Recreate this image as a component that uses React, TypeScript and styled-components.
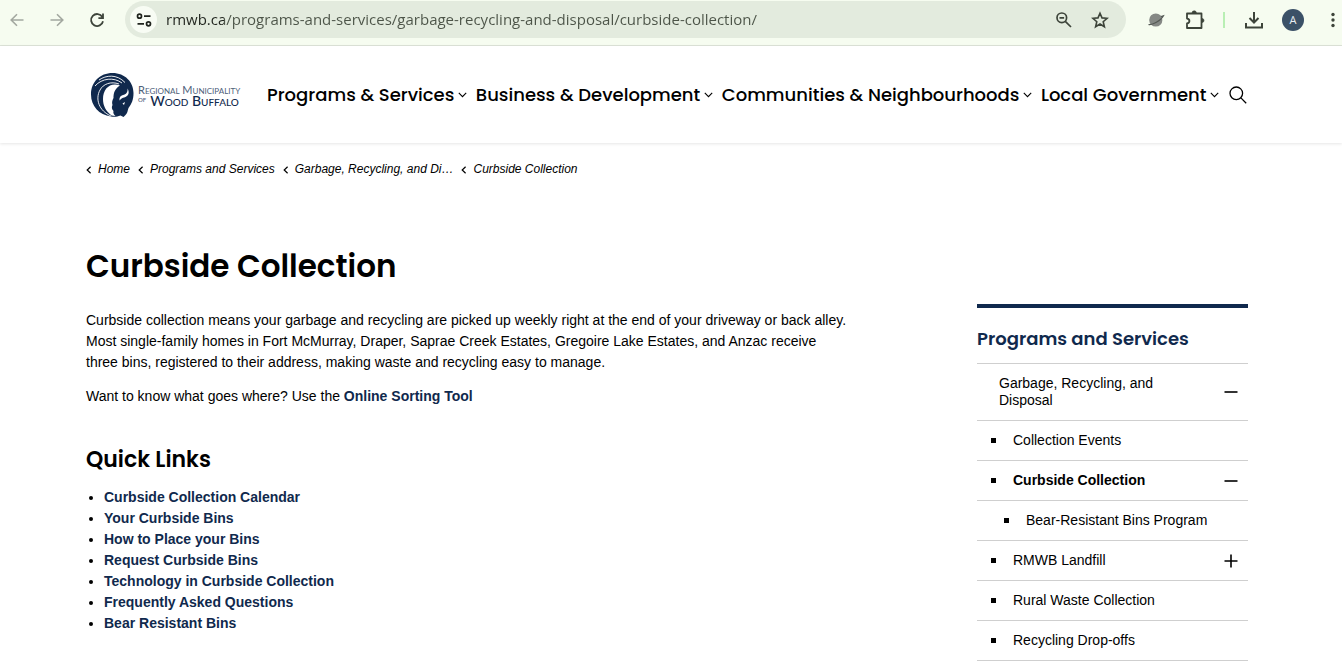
import React from "react";
import styled, { createGlobalStyle } from "styled-components";

const sans = `"Liberation Sans", Arial, sans-serif`;
const display = `Poppins, Inter, sans-serif`;
const ui = `"Open Sans", "Noto Sans", sans-serif`;
const navy = "#10294d";

const GlobalStyle = createGlobalStyle`
  *, *::before, *::after { box-sizing: border-box; }
  body { margin: 0; background: #fff; color: #000; font-family: ${sans}; font-size: 14px; line-height: 21px; }
  button, input { font: inherit; color: inherit; }
  a { color: inherit; text-decoration: none; }
`;

const Toolbar = styled.header`
  display: flex;
  align-items: center;
  height: 46px;
  padding: 0 0 6px 5px;
  background: #f6fcf0;
  border-bottom: 1px solid #dde3d8;
  color: #3d443a;
`;

const IconButton = styled.button<{ $size?: number; $muted?: boolean }>`
  display: flex;
  align-items: center;
  justify-content: center;
  flex: none;
  width: ${(p) => p.$size ?? 40}px;
  height: 36px;
  padding: 0;
  border: 0;
  background: none;
  color: ${(p) => (p.$muted ? "#a3a8a0" : "inherit")};
`;

const History = styled.div`
  display: flex;
  gap: 16px;
  margin-right: 16px;
`;

const Omnibox = styled.form`
  display: flex;
  align-items: center;
  flex: 1;
  height: 37px;
  padding: 0 8px 0 5px;
  border-radius: 19px;
  background: #e3ebde;
`;

const SiteInfo = styled(IconButton)`
  width: 27px;
  height: 27px;
  border-radius: 50%;
  background: #f8fcf4;
`;

const Address = styled.input`
  flex: 1;
  min-width: 0;
  margin: 0 9px;
  padding: 0 0 2px;
  border: 0;
  outline: 0;
  font-family: ${ui};
  font-size: 15px;
  line-height: 20px;
  color: transparent;
  background: linear-gradient(to right, #20241e 58px, #4c5448 58px);
  background-clip: text;
`;

const Extensions = styled.div`
  display: flex;
  align-items: center;
  padding-left: 10px;
`;

const Divider = styled.span`
  width: 2px;
  height: 16px;
  margin: 0 9px;
  background: #b9efb4;
`;

const MoreButton = styled(IconButton)`
  margin-left: 12px;
`;

const Avatar = styled.span`
  display: grid;
  place-items: center;
  width: 22px;
  height: 22px;
  border-radius: 50%;
  background: #3b5167;
  color: #e8edf2;
  font: 500 11px/22px ${ui};
`;

const SiteHeader = styled.header`
  display: flex;
  align-items: center;
  height: 97px;
  padding: 0 94px 0 90px;
  box-shadow: 0 1px 3px rgba(0, 0, 0, 0.1);
`;

const Logo = styled.a`
  display: flex;
  align-items: center;
  gap: 3px;
  flex: none;
  width: 149px;
  margin-right: 28px;
  color: ${navy};
`;

const Wordmark = styled.span`
  display: grid;
  font-family: Lato, sans-serif;
  font-variant: small-caps;
  white-space: nowrap;
`;

const WordmarkTop = styled.span`
  font-size: 11px;
  line-height: 11px;
  color: #4d6079;
`;

const WordmarkBottom = styled.span`
  display: flex;
  gap: 4px;
  font-size: 14px;
  font-weight: 500;
  line-height: 11px;
`;

const Of = styled.small`
  font-size: 9px;
  line-height: 8px;
  color: #4d6079;
`;

const Menu = styled.nav`
  display: flex;
  flex: 1;
  align-items: center;
  justify-content: space-between;
`;

const MenuButton = styled.button`
  display: flex;
  align-items: center;
  gap: 4px;
  padding: 0;
  border: 0;
  background: none;
  font: 500 18px/28px ${display};
  white-space: nowrap;
`;

const Crumbs = styled.ol`
  display: flex;
  align-items: center;
  gap: 8px;
  margin: 0;
  padding: 16px 94px 0 86px;
  list-style: none;
  font-size: 12px;
  font-style: italic;
`;

const Crumb = styled.li`
  display: flex;
  align-items: center;
  gap: 6px;
`;

const Page = styled.div`
  display: grid;
  grid-template-columns: minmax(0, 1fr) 271px;
  column-gap: 120px;
  padding: 66px 94px 0 86px;
`;

const Main = styled.main`
  min-width: 0;
`;

const Title = styled.h1`
  margin: 0 0 24px;
  font: 600 31px/40px ${display};
`;

const Subtitle = styled.h2`
  margin: 0 0 12px;
  padding-top: 25px;
  font: 600 22px/30px ${display};
`;

const Text = styled.p`
  max-width: 764px;
  margin: 0 0 13px;
`;

const StrongLink = styled.a`
  font-weight: 700;
  color: ${navy};
`;

const Links = styled.ul`
  margin: 0;
  padding-left: 18px;
`;

const Side = styled.nav`
  align-self: start;
  margin-top: 58px;
  border-top: 4px solid ${navy};
`;

const SideTitle = styled.h2`
  margin: 0;
  padding: 16px 0 9px;
  font: 600 18px/30px ${display};
  color: ${navy};
`;

const SideList = styled.ul`
  margin: 0;
  padding: 0;
  list-style: none;
  border-bottom: 1px solid #cfcfcf;
`;

const SideRow = styled.li<{ $indent: number; $bold?: boolean }>`
  display: flex;
  align-items: center;
  min-height: 40px;
  padding: 11px 6px 11px ${(p) => p.$indent}px;
  border-top: 1px solid #cfcfcf;
  line-height: 17px;
  font-weight: ${(p) => (p.$bold ? 700 : 400)};
`;

const Square = styled.span`
  flex: none;
  width: 5px;
  height: 5px;
  margin-right: 17px;
  background: #000;
`;

const SideLink = styled.a<{ $narrow?: boolean }>`
  max-width: ${(p) => (p.$narrow ? "180px" : "none")};
`;

const Toggle = styled.button`
  display: flex;
  margin: 0 0 0 auto;
  padding: 0 4px;
  border: 0;
  background: none;
`;

const Chevron = () => (
  <svg width="9" height="6" viewBox="0 0 9 6" fill="none" stroke="#000" strokeWidth="1.1" aria-hidden>
    <path d="M.8.8 4.5 4.6 8.2.8" />
  </svg>
);

const CrumbArrow = () => (
  <svg width="6" height="8" viewBox="0 0 6 8" fill="none" stroke="#000" strokeWidth="1.2" aria-hidden>
    <path d="M4.600 .8 1.200 4 4.600 7.200" />
  </svg>
);

const BisonMark = styled.svg`
  flex: none;
`;

const Bison = () => (
  <BisonMark width="45" height="46" viewBox="0 0 45 46" aria-hidden>
    <path d="M22.500 1C35 1 43.500 10 43.500 21c0 7-2 11-5 15-1 3-1 5-3 7l-2 2-3-1.500C27 45 24 45 21 44.500 9 43 1 34 1 22.500 1 10 10 1 22.500 1z" fill={navy} />
    <path d="M30 13.500C20 10 13 17 13 27c0 7 3 12 8.500 16.500l4 .5c-2-2-2.500-3-2-5-2-2-2-4-1-6-1-3 0-5 1-7 0-5 1-9 6.500-12.500z" fill="#fff" />
    <path d="M37.500 16.500c2 3.500 1.500 7-2 8.500-2 .8-3 .5-4.500 2l-1.500 1.500c-.5-3 1-5 3.500-5.500 3-.8 5-2.500 4.500-6.500z" fill="#fff" />
    <path d="M32.500 31.500l2.500-1.500-1 3z" fill="#fff" />
    <path d="M9 8C16 3 27 2 35 10.500M5 14C12 6 24 5 32 11M21 44C9 39 5 27 10 18 13 12 21 9 29 12" fill="none" stroke="#fff" strokeWidth="0.9" />
  </BisonMark>
);

const menu = ["Programs & Services", "Business & Development", "Communities & Neighbourhoods", "Local Government"];
const crumbs = ["Home", "Programs and Services", "Garbage, Recycling, and Di…", "Curbside Collection"];
const quickLinks = [
  "Curbside Collection Calendar",
  "Your Curbside Bins",
  "How to Place your Bins",
  "Request Curbside Bins",
  "Technology in Curbside Collection",
  "Frequently Asked Questions",
  "Bear Resistant Bins",
];

type SideItem = { label: string; level: 0 | 1 | 2; current?: boolean; toggle?: "open" | "closed" };
const sideItems: SideItem[] = [
  { label: "Garbage, Recycling, and Disposal", level: 0, toggle: "open" },
  { label: "Collection Events", level: 1 },
  { label: "Curbside Collection", level: 1, current: true, toggle: "open" },
  { label: "Bear-Resistant Bins Program", level: 2 },
  { label: "RMWB Landfill", level: 1, toggle: "closed" },
  { label: "Rural Waste Collection", level: 1 },
  { label: "Recycling Drop-offs", level: 1 },
];
const indents = [22, 14, 27];

export default function App() {
  return (
    <>
      <GlobalStyle />
      <Toolbar>
        <History>
          <IconButton $size={24} $muted aria-label="Back">
            <svg width="16" height="16" viewBox="0 0 16 16" fill="none" stroke="currentColor" strokeWidth="1.6"><path d="M14.500 8H2.500M8 2.200 2.200 8 8 13.800" /></svg>
          </IconButton>
          <IconButton $size={24} $muted aria-label="Forward">
            <svg width="16" height="16" viewBox="0 0 16 16" fill="none" stroke="currentColor" strokeWidth="1.6"><path d="M1.500 8h12M8 2.200 13.800 8 8 13.800" /></svg>
          </IconButton>
          <IconButton $size={24} aria-label="Reload">
            <svg width="16" height="16" viewBox="0 0 16 16" fill="none" stroke="currentColor" strokeWidth="1.8"><path d="M13.300 5A6 6 0 1 0 14 9.200M14 1.500v4.600H9.400" /></svg>
          </IconButton>
        </History>
        <Omnibox>
          <SiteInfo type="button" aria-label="Site information">
            <svg width="16" height="14" viewBox="0 0 16 14" fill="none" stroke="#20241e" strokeWidth="1.700"><circle cx="3.500" cy="3.200" r="2" /><path d="M8 3.200h6.500M1.500 10.800H8" /><circle cx="12.500" cy="10.800" r="2" /></svg>
          </SiteInfo>
          <Address
            aria-label="Address"
            spellCheck={false}
            defaultValue="rmwb.ca/programs-and-services/garbage-recycling-and-disposal/curbside-collection/"
          />
          <IconButton type="button" $size={36} aria-label="Zoom out">
            <svg width="18" height="18" viewBox="0 0 18 18" fill="none" stroke="currentColor" strokeWidth="1.700"><circle cx="6.800" cy="6.800" r="4.800" /><path d="M4.500 6.800h4.600M10.300 10.300 16 16" /></svg>
          </IconButton>
          <IconButton type="button" $size={36} aria-label="Bookmark">
            <svg width="18" height="18" viewBox="0 0 18 18" fill="none" stroke="currentColor" strokeWidth="1.600"><path d="m9 2.200 2 4.700 5.100.4-3.900 3.400 1.200 5L9 13l-4.400 2.700 1.200-5-3.900-3.400L7 6.900z" /></svg>
          </IconButton>
        </Omnibox>
        <Extensions>
          <IconButton aria-label="Planet extension">
            <svg width="18" height="16" viewBox="0 0 18 16"><circle cx="8.800" cy="8" r="6.600" fill="#858885" /><path d="M1.500 12.500C5 13.500 14 8.500 16.500 3.800L14 4.500" stroke="#555955" strokeWidth="1.200" fill="none" /></svg>
          </IconButton>
          <IconButton $size={38} aria-label="Extensions">
            <svg width="20" height="20" viewBox="0 0 20 20" fill="none" stroke="currentColor" strokeWidth="1.800" strokeLinejoin="round"><path d="M2 3.500h14.500V18H2v-4.500c3.200-.6 3.200-4.400 0-5z" /><path d="M7 3a2.200 2.200 0 0 1 4.400 0zM17 8.500a2 2 0 0 1 0 4z" fill="currentColor" strokeWidth="0.600" /></svg>
          </IconButton>
          <Divider />
          <IconButton aria-label="Downloads">
            <svg width="20" height="20" viewBox="0 0 20 20" fill="none" stroke="currentColor" strokeWidth="2"><path d="M10 2v10M5.500 8l4.500 4.500L14.500 8M2 13v4.500h16V13" /></svg>
          </IconButton>
          <IconButton $size={38} aria-label="Profile">
            <Avatar>A</Avatar>
          </IconButton>
          <MoreButton $size={18} aria-label="More">
            <svg width="4" height="16" viewBox="0 0 4 16" fill="currentColor"><circle cx="2" cy="2.500" r="1.700" /><circle cx="2" cy="8" r="1.700" /><circle cx="2" cy="13.500" r="1.700" /></svg>
          </MoreButton>
        </Extensions>
      </Toolbar>

      <SiteHeader>
        <Logo href="#home">
          <Bison />
          <Wordmark>
            <WordmarkTop>Regional Municipality</WordmarkTop>
            <WordmarkBottom><Of>of</Of>Wood Buffalo</WordmarkBottom>
          </Wordmark>
        </Logo>
        <Menu aria-label="Main">
          {menu.map((label) => (
            <MenuButton key={label}>{label}<Chevron /></MenuButton>
          ))}
          <IconButton $size={20} aria-label="Search">
            <svg width="18" height="18" viewBox="0 0 18 18" fill="none" stroke="#000" strokeWidth="1.300"><circle cx="7.300" cy="7.300" r="6.300" /><path d="m11.900 11.900 5.300 5.300" /></svg>
          </IconButton>
        </Menu>
      </SiteHeader>

      <nav aria-label="Breadcrumb">
        <Crumbs>
          {crumbs.map((label) => (
            <Crumb key={label}><CrumbArrow /><a href="#crumb">{label}</a></Crumb>
          ))}
        </Crumbs>
      </nav>

      <Page>
        <Main>
          <Title>Curbside Collection</Title>
          <Text>
            Curbside collection means your garbage and recycling are picked up weekly right at the end of your driveway or
            back alley. Most single-family homes in Fort McMurray, Draper, Saprae Creek Estates, Gregoire Lake Estates, and
            Anzac receive three bins, registered to their address, making waste and recycling easy to manage.
          </Text>
          <Text>
            Want to know what goes where? Use the <StrongLink href="#sorting">Online Sorting Tool</StrongLink>
          </Text>
          <Subtitle>Quick Links</Subtitle>
          <Links>
            {quickLinks.map((label) => (
              <li key={label}><StrongLink href="#link">{label}</StrongLink></li>
            ))}
          </Links>
        </Main>
        <Side aria-label="Section">
          <SideTitle>Programs and Services</SideTitle>
          <SideList>
            {sideItems.map((item) => (
              <SideRow key={item.label} $indent={indents[item.level]} $bold={item.current}>
                {item.level > 0 && <Square />}
                <SideLink href="#section" $narrow={item.level === 0}>{item.label}</SideLink>
                {item.toggle && (
                  <Toggle aria-label={item.toggle === "open" ? "Collapse" : "Expand"}>
                    <svg width="14" height="14" viewBox="0 0 14 14" stroke="#000" strokeWidth="1.600">
                      <path d={item.toggle === "open" ? "M.5 7h13" : "M.5 7h13M7 .5v13"} />
                    </svg>
                  </Toggle>
                )}
              </SideRow>
            ))}
          </SideList>
        </Side>
      </Page>
    </>
  );
}
